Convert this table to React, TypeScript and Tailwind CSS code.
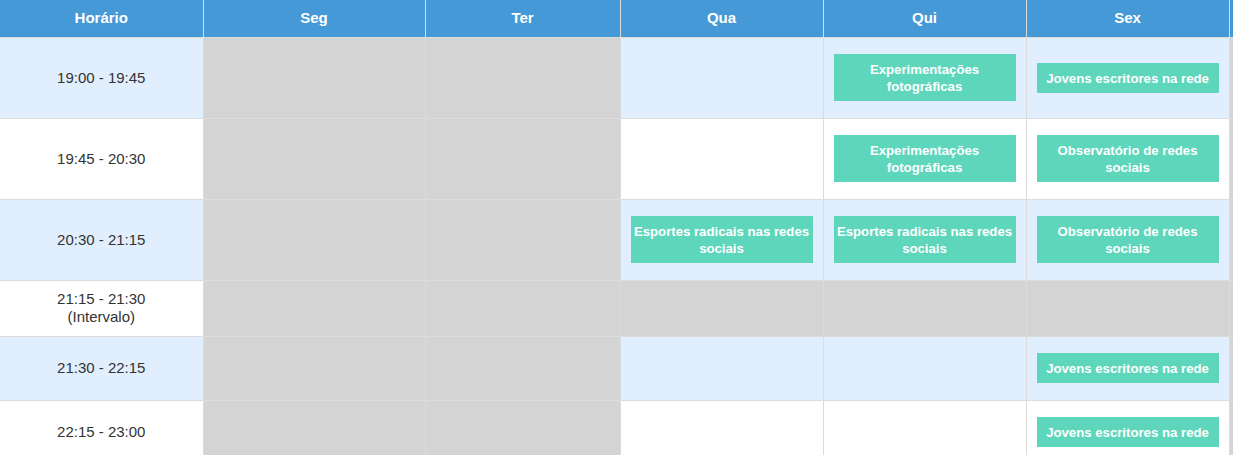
import React from "react";

type Cell = { kind: "empty" } | { kind: "off" } | { kind: "class"; label: string };

interface Row {
  time: string;
  note?: string;
  height: string;
  shaded: boolean;
  cells: Cell[];
}

// last column is cut off by the window edge, its label is never seen
const DAYS = ["Seg", "Ter", "Qua", "Qui", "Sex", ""];

const E: Cell = { kind: "empty" };
const O: Cell = { kind: "off" };
const C = (label: string): Cell => ({ kind: "class", label });

const ROWS: Row[] = [
  {
    time: "19:00 - 19:45",
    height: "h-[81px]",
    shaded: true,
    cells: [O, O, E, C("Experimentações fotográficas"), C("Jovens escritores na rede"), O],
  },
  {
    time: "19:45 - 20:30",
    height: "h-[81px]",
    shaded: false,
    cells: [O, O, E, C("Experimentações fotográficas"), C("Observatório de redes sociais"), O],
  },
  {
    time: "20:30 - 21:15",
    height: "h-[81px]",
    shaded: true,
    cells: [
      O,
      O,
      C("Esportes radicais nas redes sociais"),
      C("Esportes radicais nas redes sociais"),
      C("Observatório de redes sociais"),
      O,
    ],
  },
  {
    time: "21:15 - 21:30",
    note: "(Intervalo)",
    height: "h-[56px]",
    shaded: false,
    cells: [O, O, O, O, O, O],
  },
  {
    time: "21:30 - 22:15",
    height: "h-[64px]",
    shaded: true,
    cells: [O, O, E, E, C("Jovens escritores na rede"), O],
  },
  {
    time: "22:15 - 23:00",
    height: "h-[64px]",
    shaded: false,
    cells: [O, O, E, E, C("Jovens escritores na rede"), O],
  },
];

function Badge({ label }: { label: string }) {
  return (
    <div className="my-[7px] bg-[#5dd6bb] pt-[7px] pb-[6px] text-center text-[13.2px] font-bold leading-[17px] text-white">
      {label}
    </div>
  );
}

export default function App() {
  return (
    <div className="h-[455px] w-[1233px] overflow-hidden bg-white font-['Liberation_Sans',Arial,sans-serif]">
      <table className="w-[1432px] table-fixed border-collapse">
        <colgroup>
          <col className="w-[203px]" />
          <col className="w-[222px]" />
          <col className="w-[195px]" />
          <col className="w-[203px]" />
          <col className="w-[203px]" />
          <col className="w-[203px]" />
          <col className="w-[203px]" />
        </colgroup>
        <thead>
          <tr className="h-[37px] bg-[#4599d6]">
            <th className="border border-t-0 border-l-0 border-[#dcdcdc] text-center text-[15px] font-bold text-white">
              Horário
            </th>
            {DAYS.map((d, i) => (
              <th
                key={i}
                className="border border-t-0 border-[#dcdcdc] text-center text-[15px] font-bold text-white"
              >
                {d}
              </th>
            ))}
          </tr>
        </thead>
        <tbody>
          {ROWS.map(row => {
            const rowBg = row.shaded ? "bg-[#e1eefd]" : "bg-white";
            return (
              <tr key={row.time} className={row.height}>
                <td
                  className={`border border-l-0 border-[#dcdcdc] px-2.5 text-center align-middle text-[15px] leading-[18px] text-[#333] ${rowBg}`}
                >
                  <div>{row.time}</div>
                  {row.note && <div>{row.note}</div>}
                </td>
                {row.cells.map((cell, i) => (
                  <td
                    key={i}
                    className={`border border-[#dcdcdc] px-2.5 align-middle ${
                      cell.kind === "off" ? "bg-[#d4d4d4]" : rowBg
                    }`}
                  >
                    {cell.kind === "class" && <Badge label={cell.label} />}
                  </td>
                ))}
              </tr>
            );
          })}
        </tbody>
      </table>
    </div>
  );
}
